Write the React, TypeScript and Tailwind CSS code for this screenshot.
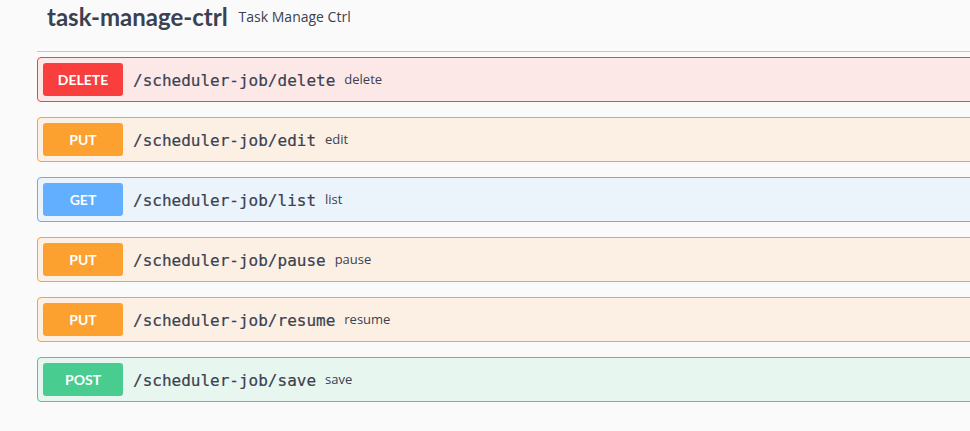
import React from "react";

type Op = { method: string; path: string; desc: string };

const ops: Op[] = [
  { method: "DELETE", path: "/scheduler-job/delete", desc: "delete" },
  { method: "PUT", path: "/scheduler-job/edit", desc: "edit" },
  { method: "GET", path: "/scheduler-job/list", desc: "list" },
  { method: "PUT", path: "/scheduler-job/pause", desc: "pause" },
  { method: "PUT", path: "/scheduler-job/resume", desc: "resume" },
  { method: "POST", path: "/scheduler-job/save", desc: "save" },
];

const styles: Record<string, { row: string; badge: string }> = {
  DELETE: { row: "bg-[#fde8e8] border-[#f93e3e]", badge: "bg-[#f93e3e]" },
  PUT: { row: "bg-[#fcf0e5] border-[#fca130]", badge: "bg-[#fca130]" },
  GET: { row: "bg-[#ebf3fb] border-[#61affe]", badge: "bg-[#61affe]" },
  POST: { row: "bg-[#e8f6f0] border-[#49cc90]", badge: "bg-[#49cc90]" },
};

export default function App() {
  return (
    <div className="w-[970px] h-[431px] overflow-hidden bg-[#fafafa] text-[#3b4151]">
      <div className="ml-[37px] w-[1100px]">
        <div className="flex items-center h-[52px] pb-[17px] pl-[10px] border-b border-[#c4c6cb] mb-[5px]">
          <span className="text-[24px] leading-none font-bold font-['Lato',sans-serif]">
            task-manage-ctrl
          </span>
          <span className="pl-[11px] text-[14px] leading-none font-['Open_Sans',sans-serif]">
            Task Manage Ctrl
          </span>
        </div>
        <div className="flex flex-col gap-[15px]">
          {ops.map((op, i) => {
            const s = styles[op.method];
            return (
              <div
                key={i}
                className={`flex items-center h-[45px] p-[5px] border rounded-[4px] ${s.row}`}
              >
                <div
                  className={`w-[80px] h-[33px] flex items-center justify-center rounded-[3px] text-white text-[14px] font-bold font-['Lato',sans-serif] ${s.badge}`}
                >
                  {op.method}
                </div>
                <span className="pl-[10px] pr-[9px] pt-[2px] text-[16px] font-normal [-webkit-text-stroke:0.2px_#3b4151] font-['DejaVu_Sans_Mono',monospace]">
                  {op.path}
                </span>
                <span className="pt-[1px] text-[13px] font-['Open_Sans',sans-serif]">
                  {op.desc}
                </span>
              </div>
            );
          })}
        </div>
      </div>
    </div>
  );
}
